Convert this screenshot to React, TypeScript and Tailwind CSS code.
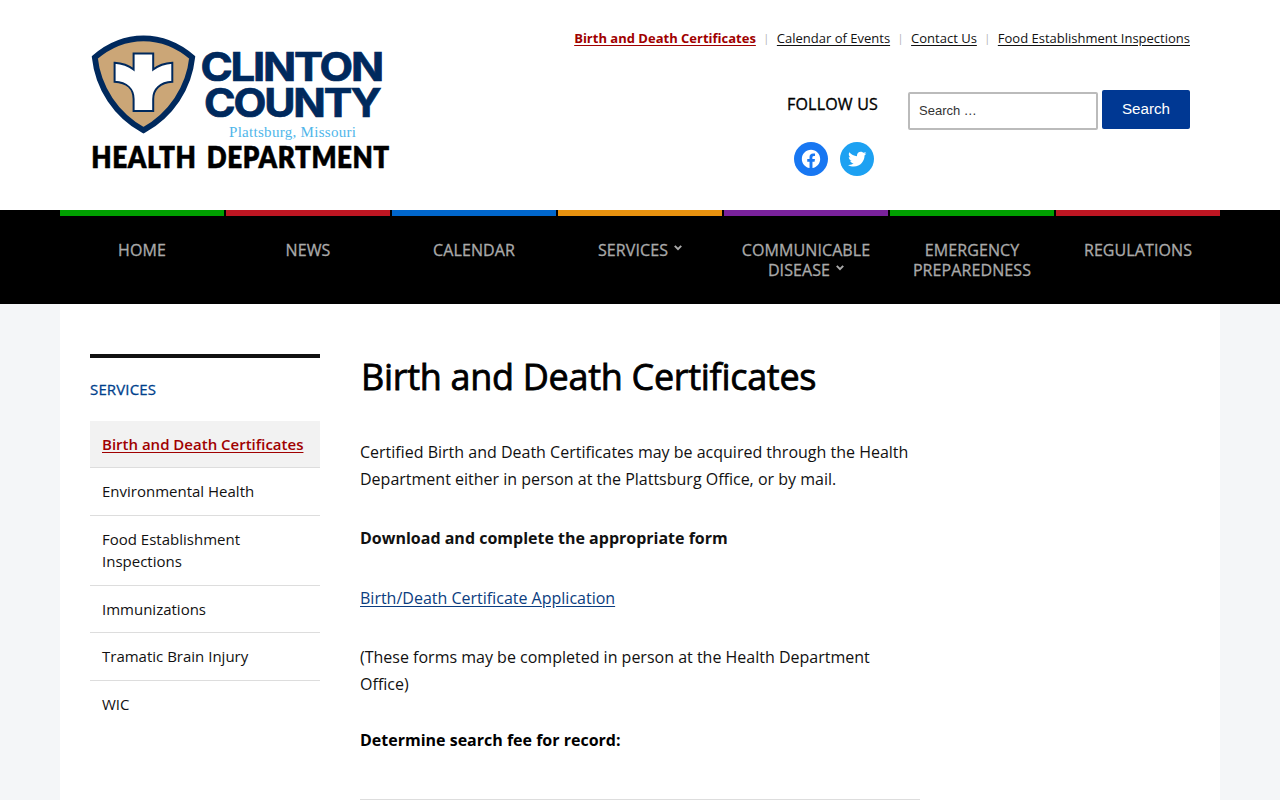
import React from "react";

const topLinks = ["Calendar of Events", "Contact Us", "Food Establishment Inspections"];

const navItems = [
  { lines: ["HOME"], border: "border-[#00a000]" },
  { lines: ["NEWS"], border: "border-[#be1622]" },
  { lines: ["CALENDAR"], border: "border-[#0066cc]" },
  { lines: ["SERVICES"], border: "border-[#e8920f]", menu: true },
  { lines: ["COMMUNICABLE", "DISEASE"], border: "border-[#7a229c]", menu: true },
  { lines: ["EMERGENCY", "PREPAREDNESS"], border: "border-[#00a000]" },
  { lines: ["REGULATIONS"], border: "border-[#be1622]" },
];

const sideItems = [
  { label: "Environmental Health", h: "h-12" },
  { label: "Food Establishment Inspections", h: "h-[70px]" },
  { label: "Immunizations", h: "h-[47px]" },
  { label: "Tramatic Brain Injury", h: "h-12" },
  { label: "WIC", h: "h-[47px]" },
];

function Logo() {
  return (
    <svg width="302" height="146" viewBox="90 30 302 146" className="block">
      <path
        d="M143.500 38.400Q170 38.400 192.200 57.400C189 88 171 115 143.500 130.300C116 115 98 88 94.800 57.400Q117 38.400 143.500 38.400Z"
        fill="#cba677"
        stroke="#00295d"
        strokeWidth="5.800"
      />
      <path
        d="M133.600 53.500H153.200V69.500Q161 63.500 172.300 62.800V81.800C160 82.500 153.200 89 153.200 99V111H133.600V99C133.600 89 127 82.500 114.600 81.800V62.800Q126 63.500 133.600 69.500Z"
        fill="#fff"
        stroke="#00295d"
        strokeWidth="2"
      />
      <g fill="#00295d" stroke="#00295d" strokeWidth="0.700" fontFamily="Inter, sans-serif" fontWeight="700" fontSize="39.800" letterSpacing="-2">
        <text x="200.500" y="81.100" textLength="181.500" lengthAdjust="spacingAndGlyphs">CLINTON</text>
        <text x="204" y="116.500" textLength="175.500" lengthAdjust="spacingAndGlyphs">COUNTY</text>
      </g>
      <text x="229" y="137" fill="#4fb6ea" fontFamily="Liberation Serif, serif" fontSize="15" textLength="127">
        Plattsburg, Missouri
      </text>
      <g fill="#000" stroke="#000" strokeWidth="0.500" fontFamily="Lato, sans-serif" fontWeight="800" fontSize="30.500" letterSpacing="0.600">
        <text x="91.300" y="167.600" textLength="105" lengthAdjust="spacingAndGlyphs">HEALTH</text>
        <text x="206.800" y="167.600" textLength="183" lengthAdjust="spacingAndGlyphs">DEPARTMENT</text>
      </g>
    </svg>
  );
}

function Caret() {
  return (
    <svg width="8" height="6" viewBox="0 0 8 6" className="ml-1.5 inline-block -translate-y-1" fill="none" stroke="#aaa" strokeWidth="2">
      <path d="M0.800 0.900L4 4.100L7.200 0.900" />
    </svg>
  );
}

function Header() {
  return (
    <header className="mx-auto flex h-[210px] w-[1160px] justify-between px-[30px] pt-[30px]">
      <Logo />
      <div className="-mt-px flex flex-col items-end">
        <div className="flex h-[18px] items-center text-[13px] leading-[18px] whitespace-nowrap">
          <a className="font-bold text-[#a00000] underline underline-offset-2">Birth and Death Certificates</a>
          {topLinks.map((t) => (
            <React.Fragment key={t}>
              <span className="w-[21px] text-center text-[10px] text-[#aaa]">|</span>
              <a className="underline underline-offset-2">{t}</a>
            </React.Fragment>
          ))}
        </div>
        <div className="mt-[43px] flex items-start">
          <div className="mr-[30px] flex w-[91px] flex-col items-start">
            <div className="pt-[3px] text-base leading-[22px] tracking-[0.2px] whitespace-nowrap text-black [-webkit-text-stroke:0.35px]">
              FOLLOW US
            </div>
            <div className="mt-[27px] ml-[7px] flex gap-3">
              <span className="flex size-[34px] items-center justify-center rounded-full bg-[#1877f2]">
                <svg width="22" height="22" viewBox="0 0 24 24" fill="#fff">
                  <path d="M12 2C6.500 2 2 6.500 2 12c0 5 3.700 9.100 8.400 9.900v-7H7.900V12h2.500V9.800c0-2.500 1.500-3.900 3.800-3.900 1.100 0 2.200.2 2.200.2v2.500h-1.300c-1.200 0-1.600.8-1.600 1.600V12h2.800l-.4 2.900h-2.300v7C18.300 21.100 22 17 22 12c0-5.500-4.500-10-10-10z" />
                </svg>
              </span>
              <span className="flex size-[34px] items-center justify-center rounded-full bg-[#1da1f2]">
                <svg width="22" height="22" viewBox="0 0 24 24" fill="#fff">
                  <path d="M22.230 5.924c-.736.326-1.527.547-2.357.646.847-.508 1.498-1.312 1.804-2.270-.793.470-1.671.812-2.606.996C18.324 4.498 17.257 4 16.077 4c-2.266 0-4.103 1.837-4.103 4.103 0 .322.036.635.106.935-3.410-.171-6.433-1.804-8.457-4.287-.353.607-.556 1.312-.556 2.064 0 1.424.724 2.680 1.825 3.415-.673-.021-1.305-.206-1.859-.513v.052c0 1.988 1.414 3.647 3.292 4.023-.344.095-.707.145-1.081.145-.264 0-.522-.026-.772-.074.522 1.630 2.038 2.817 3.833 2.850-1.404 1.100-3.174 1.757-5.096 1.757-.332 0-.660-.020-.979-.057 1.816 1.164 3.973 1.843 6.290 1.843 7.547 0 11.675-6.252 11.675-11.675 0-.178-.004-.355-.012-.531.802-.578 1.497-1.300 2.047-2.124z" />
                </svg>
              </span>
            </div>
          </div>
          <form className="flex gap-1 font-['Liberation_Sans',Arial,sans-serif]">
            <input
              placeholder="Search …"
              className="mt-0.5 h-[38px] w-[190px] rounded-xs border-2 border-[#bbb] bg-white px-[9px] pb-0.5 text-[13px] placeholder:text-[#333]"
            />
            <button type="button" className="h-[39px] w-[88px] rounded-xs bg-[#003893] text-[15.200px] text-white">
              Search
            </button>
          </form>
        </div>
      </div>
    </header>
  );
}

export default function App() {
  return (
    <div className="h-[800px] w-[1280px] overflow-hidden bg-[#f4f6f8] font-['Open_Sans',sans-serif] text-[#111]">
      <div className="bg-white">
        <Header />
      </div>
      <nav className="h-[94px] bg-black">
        <ul className="mx-auto flex w-[1160px] gap-0.5">
          {navItems.map((item) => (
            <li
              key={item.lines[0]}
              className={`w-[164px] border-t-[6px] pt-6 text-center text-base leading-5 tracking-[0.1px] text-[#aaa] [-webkit-text-stroke:0.3px] ${item.border}`}
            >
              {item.lines.map((line, i) => (
                <div key={line}>
                  {line}
                  {item.menu && i === item.lines.length - 1 && <Caret />}
                </div>
              ))}
            </li>
          ))}
        </ul>
      </nav>
      <div className="mx-auto flex h-[496px] w-[1160px] gap-10 bg-white px-[30px] pt-[50px]">
        <aside className="w-[230px] border-t-4 border-[#111]">
          <h2 className="mt-5 text-[15px] leading-[22px] tracking-[0.15px] text-[#003f8c] [-webkit-text-stroke:0.3px]">SERVICES</h2>
          <ul className="mt-[21px] text-[15px] leading-[22px]">
            <li className="h-[47px] border-b border-[#ddd] bg-[#f2f2f2] px-3 pt-3">
              <a className="font-semibold text-[#a00000] underline underline-offset-2">Birth and Death Certificates</a>
            </li>
            {sideItems.map((item) => (
              <li key={item.label} className={`border-b border-[#ddd] px-3 pt-3 last:border-0 ${item.h}`}>
                {item.label}
              </li>
            ))}
          </ul>
        </aside>
        <main className="w-[560px] text-base leading-[27px]">
          <h1 className="pl-px text-[36px] leading-[46px] tracking-[-0.300px] text-black [-webkit-text-stroke:0.8px]">
            Birth and Death Certificates
          </h1>
          <p className="mt-[39px]">
            Certified Birth and Death Certificates may be acquired through the Health Department either in person at the
            Plattsburg Office, or by mail.
          </p>
          <p className="mt-8 font-bold">Download and complete the appropriate form</p>
          <p className="mt-[33px]">
            <a className="text-[#0b3d80] underline underline-offset-2">Birth/Death Certificate Application</a>
          </p>
          <p className="mt-8">(These forms may be completed in person at the Health Department Office)</p>
          <h4 className="mt-[29px] font-bold text-black">Determine search fee for record:</h4>
          <hr className="mt-[45px] border-t border-[#ddd]" />
        </main>
      </div>
    </div>
  );
}
